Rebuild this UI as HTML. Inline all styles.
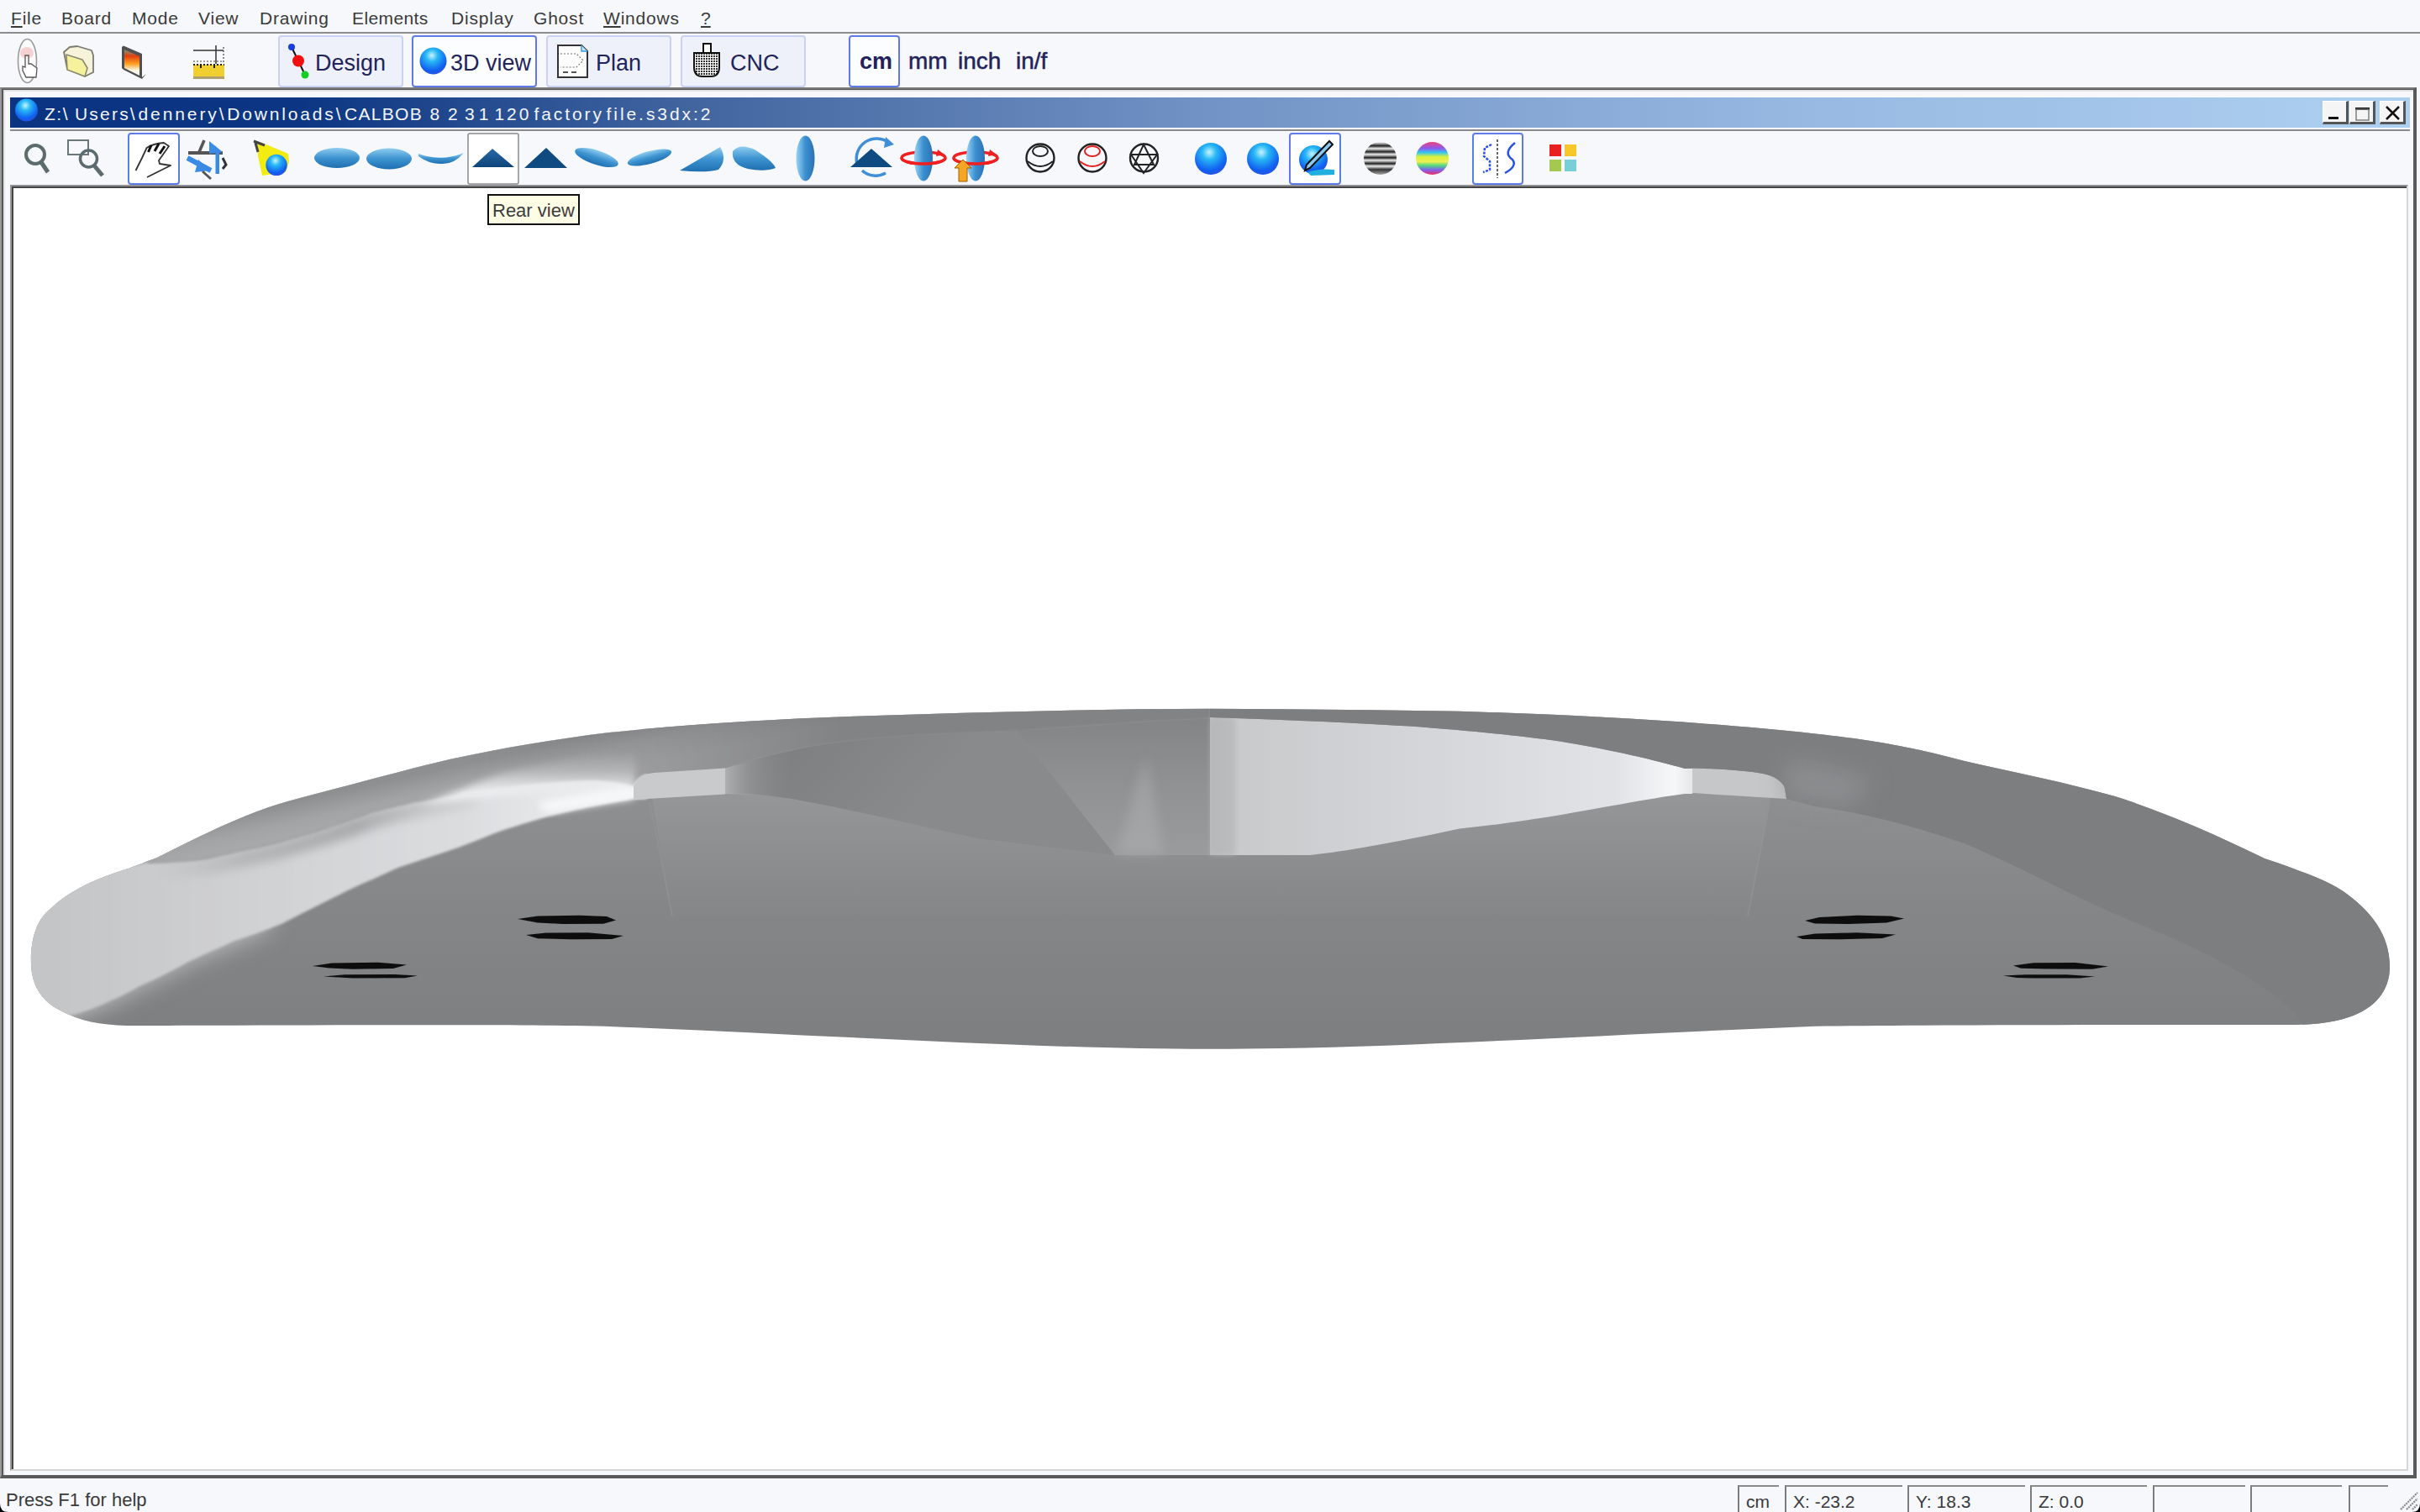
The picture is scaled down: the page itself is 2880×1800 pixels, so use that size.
<!DOCTYPE html>
<html><head><meta charset="utf-8">
<style>
*{margin:0;padding:0;box-sizing:border-box}
html,body{width:2880px;height:1800px;overflow:hidden;background:#f6f8fc;font-family:"Liberation Sans",sans-serif;position:relative}
.a{position:absolute}
.menu span{position:absolute;top:9px;font-size:21px;color:#3a3a3a;white-space:nowrap;line-height:26px}
.msep{top:38px;left:0;width:2880px;height:2px;background:#8c8c8c}
.btn{position:absolute;top:42px;height:62px;width:149px;border:2px solid #c9d2f2;border-radius:4px;background:#eef1f9}
.btn.sel{border-color:#5f7be8;background:#fcfdff}
.btxt{position:absolute;font-size:27px;color:#22235a;line-height:32px;top:15px;white-space:nowrap}
.unit{position:absolute;top:57px;font-size:28px;color:#22235a;line-height:32px;white-space:nowrap;-webkit-text-stroke:0.5px #22235a}
.frame{top:104px;left:0;width:2876px;height:1656px;border-top:2px solid #7a7a7a;border-left:2px solid #9a9a9a;border-right:4px solid #5a5a5a;border-bottom:4px solid #5a5a5a;box-shadow:inset 2px 1px 0 #555,inset 4px 3px 0 #e2e2e2;background:#f6f8fc}
.title{top:116px;left:12px;width:2856px;height:36px;background:linear-gradient(90deg,#0a3480 0%,#0c3683 12%,#41649f 28%,#7193c5 50%,#98b9e2 75%,#aed0f0 100%)}
.tsep{top:154px;left:12px;width:2856px;height:2px;background:#8a8a8a}
.canvas{top:220px;left:12px;width:2854px;height:1531px;background:#fff;border-top:2px solid #8f9093;border-left:2px solid #9a9a9a;border-right:2px solid #d6d6d6;border-bottom:2px solid #d6d6d6;box-shadow:inset 2px 2px 0 #454545}
.sp{position:absolute;top:1768px;height:40px;border-left:2px solid #7d7d7d;border-top:2px solid #8a8a8a;font-size:21px;color:#3a3a3a;padding-left:8px;line-height:36px;white-space:nowrap}
.tbb{position:absolute;top:120px;width:31px;height:28px;background:#f5f5f5;border-top:1px solid #fff;border-left:1px solid #fff;border-right:3px solid #555;border-bottom:3px solid #555}
</style></head><body>
<div class="a menu" style="left:0;top:0;width:2880px;height:38px">
<span style="left:13px;letter-spacing:0.8px"><u>F</u>ile</span>
<span style="left:73px;letter-spacing:0.8px">Board</span>
<span style="left:157px;letter-spacing:0.8px">Mode</span>
<span style="left:236px;letter-spacing:0.8px">View</span>
<span style="left:309px;letter-spacing:0.8px">Drawing</span>
<span style="left:419px;letter-spacing:0.4px">Elements</span>
<span style="left:537px;letter-spacing:0.8px">Display</span>
<span style="left:635px;letter-spacing:0.8px">Ghost</span>
<span style="left:718px;letter-spacing:0.8px"><u>W</u>indows</span>
<span style="left:834px"><u>?</u></span>
</div>
<div class="a msep"></div>
<div class="btn" style="left:331px"><span class="btxt" style="left:42px">Design</span></div>
<div class="btn sel" style="left:490px"><span class="btxt" style="left:44px">3D view</span></div>
<div class="btn" style="left:650px"><span class="btxt" style="left:57px">Plan</span></div>
<div class="btn" style="left:810px"><span class="btxt" style="left:57px">CNC</span></div>
<div class="btn sel" style="left:1010px;width:61px"></div>
<span class="unit" style="left:1023px;font-size:27px;font-weight:bold;-webkit-text-stroke:0">cm</span>
<span class="unit" style="left:1081px">mm</span>
<span class="unit" style="left:1140px">inch</span>
<span class="unit" style="left:1209px">in/f</span>
<div class="a frame"></div>
<div class="a title"></div>
<div class="a" style="left:0;top:123px;width:900px;height:26px;font-size:21px;line-height:26px;color:#f4f6fa;white-space:nowrap"><span style="position:absolute;left:53px;letter-spacing:1.5px">Z:\</span><span style="position:absolute;left:89px;letter-spacing:2.2px">Users\</span><span style="position:absolute;left:164.5px;letter-spacing:2.9px">dennery\</span><span style="position:absolute;left:270.3px;letter-spacing:2.83px">Downloads\</span><span style="position:absolute;left:410px;letter-spacing:1.3px">CALBOB</span><span style="position:absolute;left:511.5px;letter-spacing:0px">8</span><span style="position:absolute;left:533px;letter-spacing:0px">2</span><span style="position:absolute;left:553px;letter-spacing:5px">31</span><span style="position:absolute;left:588.5px;letter-spacing:2.9px">120</span><span style="position:absolute;left:635.5px;letter-spacing:2.9px">factory</span><span style="position:absolute;left:721.5px;letter-spacing:2.94px">file.s3dx:2</span></div>
<div class="tbb" style="left:2764px"></div>
<div class="tbb" style="left:2796px"></div>
<div class="tbb" style="left:2832px"></div>
<div class="a tsep"></div>
<div class="a canvas"></div>
<div class="a" style="left:580px;top:231px;width:110px;height:37px;background:#fdfde6;border:2px solid #111"></div>
<div class="a" style="left:586px;top:238px;font-size:22px;line-height:26px;color:#3c3c3c;white-space:nowrap">Rear view</div>
<div class="a" style="left:7px;top:1773px;font-size:22px;line-height:26px;color:#3a3a3a;white-space:nowrap">Press F1 for help</div>
<div class="sp" style="left:2068px;width:49px">cm</div>
<div class="sp" style="left:2124px;width:140px">X: -23.2</div>
<div class="sp" style="left:2270px;width:140px">Y: 18.3</div>
<div class="sp" style="left:2416px;width:139px">Z: 0.0</div>
<div class="sp" style="left:2562px;width:110px"></div>
<div class="sp" style="left:2678px;width:109px"></div>
<div class="sp" style="left:2795px;width:47px"></div>
<!--ICONS--><svg class="a" style="left:0;top:0" width="2880" height="240" viewBox="0 0 2880 240">
<defs>
<radialGradient id="gs" cx="0.45" cy="0.3" r="0.75">
<stop offset="0" stop-color="#c8f4ff"/><stop offset="0.3" stop-color="#27b8f5"/><stop offset="0.75" stop-color="#1160f0"/><stop offset="1" stop-color="#2a4fe0"/>
</radialGradient>
<linearGradient id="gl" x1="0" y1="0" x2="0" y2="1">
<stop offset="0" stop-color="#8fcdf0"/><stop offset="0.5" stop-color="#3d93d0"/><stop offset="1" stop-color="#1f6fb0"/>
</linearGradient>
<linearGradient id="glv" x1="0" y1="0" x2="1" y2="0">
<stop offset="0" stop-color="#9ad4f5"/><stop offset="0.5" stop-color="#3b8fcf"/><stop offset="1" stop-color="#2b72b5"/>
</linearGradient>
<linearGradient id="gt" x1="0" y1="0" x2="0" y2="1">
<stop offset="0" stop-color="#2a6aa8"/><stop offset="1" stop-color="#0c4478"/>
</linearGradient>
<linearGradient id="gstripe" x1="0" y1="0" x2="0" y2="1">
<stop offset="0" stop-color="#fff"/><stop offset="0.12" stop-color="#222"/><stop offset="0.2" stop-color="#eee"/><stop offset="0.3" stop-color="#222"/><stop offset="0.38" stop-color="#eee"/><stop offset="0.48" stop-color="#222"/><stop offset="0.56" stop-color="#eee"/><stop offset="0.66" stop-color="#222"/><stop offset="0.74" stop-color="#eee"/><stop offset="0.84" stop-color="#333"/><stop offset="1" stop-color="#aaa"/>
</linearGradient>
<linearGradient id="grain" x1="0" y1="0" x2="0" y2="1">
<stop offset="0" stop-color="#f0407a"/><stop offset="0.2" stop-color="#8a5cf0"/><stop offset="0.32" stop-color="#30c8f0"/><stop offset="0.45" stop-color="#d8f040"/><stop offset="0.6" stop-color="#f0f050"/><stop offset="0.72" stop-color="#50d880"/><stop offset="0.85" stop-color="#8060f0"/><stop offset="1" stop-color="#f03060"/>
</linearGradient>
<linearGradient id="gfilm" x1="0" y1="0" x2="0" y2="1">
<stop offset="0" stop-color="#7a9a80"/><stop offset="0.25" stop-color="#e04010"/><stop offset="0.55" stop-color="#ffa020"/><stop offset="0.8" stop-color="#fff8e8"/><stop offset="1" stop-color="#f0f0e8"/>
</linearGradient>
<pattern id="dots" width="3" height="3" patternUnits="userSpaceOnUse"><rect width="3" height="3" fill="#fff"/><rect width="2" height="2" fill="#333"/></pattern>
</defs>
<!-- toolbar1 -->
<ellipse cx="32.5" cy="72.5" rx="11" ry="26" fill="#fbfbfb" stroke="#9a9a9a" stroke-width="1.6"/>
<ellipse cx="32" cy="63" rx="8" ry="7" fill="#f6c6c8" opacity="0.8"/>
<path d="M30 66 L30 80 L27 79 L27 84 L31 92 L43 92 L44 81 L37 76 L34 76 L34 66 Z" fill="#fff" stroke="#555" stroke-width="1.3"/>
<path d="M76 62 L83 56 L92 55 L109 60 L111 66 L111 86 L101 91 L80 82 Z" fill="#f6f3da" stroke="#7a7a70" stroke-width="1.8" stroke-linejoin="round"/>
<path d="M79 65 L98 71 L104 81 L101 91 L80 83 Z" fill="#f5f19c" stroke="#8a8a70" stroke-width="1.6" stroke-linejoin="round"/>
<path d="M145 56 L147 54.5 L169 64 L169 92 L174 88 L169 94 L147 83 L145 81 Z" fill="#505050"/>
<path d="M148 59 L166 67 L166 90 L148 81 Z" fill="url(#gfilm)"/>
<rect x="230" y="77" width="37" height="17" fill="#f0cf30"/>
<rect x="230" y="91" width="37" height="3" fill="#b0a070"/>
<line x1="230" y1="77" x2="267" y2="77" stroke="#222" stroke-width="2" stroke-dasharray="2 2"/>
<line x1="230" y1="60" x2="266" y2="60" stroke="#333" stroke-width="1.5"/>
<line x1="257" y1="54" x2="257" y2="76" stroke="#333" stroke-width="1.5"/>
<line x1="266" y1="56" x2="266" y2="76" stroke="#444" stroke-width="1.2" stroke-dasharray="2 2"/>
<line x1="230" y1="73" x2="266" y2="73" stroke="#444" stroke-width="1.2" stroke-dasharray="2 2"/>
<line x1="239" y1="77" x2="239" y2="81" stroke="#222" stroke-width="2"/>
<line x1="255" y1="77" x2="255" y2="81" stroke="#222" stroke-width="2"/>
<!-- design icon -->
<line x1="347" y1="56" x2="363" y2="89" stroke="#111" stroke-width="2"/>
<circle cx="347" cy="56" r="4" fill="#1a3de0"/>
<circle cx="355" cy="72.5" r="7" fill="#f01010"/>
<circle cx="363" cy="89" r="4.5" fill="#10d020"/>
<circle cx="515.5" cy="72.5" r="16" fill="url(#gs)"/>
<!-- plan doc -->
<path d="M664 54 L692 54 L699 61 L699 92 L664 92 Z" fill="#fdfdfd" stroke="#333" stroke-width="2"/>
<path d="M692 54 L692 61 L699 61" fill="#bfe6ff" stroke="#3aa0e0" stroke-width="1.5"/>
<path d="M667 64 L686 64 L694 72 L686 80 L667 80" fill="none" stroke="#777" stroke-width="1.2" stroke-dasharray="2 2"/>
<path d="M670 86 L676 86 M680 86 L686 86" stroke="#555" stroke-width="2"/>
<!-- cnc -->
<rect x="837" y="52" width="9" height="11" fill="#fff" stroke="#111" stroke-width="2"/>
<path d="M826 63 L856 63 L856 80 Q856 91 846 91 L836 91 Q826 91 826 80 Z" fill="url(#dots)" stroke="#111" stroke-width="2"/>
<!-- title icon -->
<circle cx="31.5" cy="131" r="13.5" fill="url(#gs)"/>
<!-- title buttons glyphs -->
<rect x="2771" y="139" width="12" height="3" fill="#111"/>
<rect x="2803" y="128" width="17" height="3" fill="#111"/>
<rect x="2804" y="130" width="15" height="13" fill="none" stroke="#777" stroke-width="1.4"/>
<path d="M2840 127 L2855 142 M2855 127 L2840 142" stroke="#111" stroke-width="2.5"/>
<!-- toolbar2 -->
<circle cx="42" cy="184" r="11" fill="none" stroke="#5b6b6e" stroke-width="4"/>
<line x1="49" y1="193" x2="57" y2="205" stroke="#5b6b6e" stroke-width="5"/>
<rect x="81" y="167" width="24" height="17" fill="none" stroke="#6b7677" stroke-width="2"/>
<circle cx="105.5" cy="189" r="10" fill="none" stroke="#5b6b6e" stroke-width="3.5"/>
<line x1="112" y1="197" x2="122" y2="209" stroke="#5b6b6e" stroke-width="5"/>
<rect x="153" y="159" width="60" height="60" rx="3" fill="#fff" stroke="#5f7be8" stroke-width="2"/>
<path d="M161.5 203 L169 188 L174.6 176 Q182 171 195 170 L201 174 L189 191 L190 195 L203 197 L175 211" fill="none" stroke="#333" stroke-width="1.8" stroke-linejoin="round"/>
<path d="M176.5 181 L180 173 M184 180 L189 171 M190 183 L196 174" stroke="#111" stroke-width="3"/>
<path d="M243 167 L237 181" stroke="#555" stroke-width="3.5"/>
<path d="M224 182 L265 182" stroke="#555" stroke-width="4"/>
<rect x="256.5" y="180" width="4.5" height="27" fill="#3a8ae6"/>
<path d="M249 168 L265 181 L249 183 Z" fill="#3a8ae6"/>
<path d="M223 188 L251 203" stroke="#3a8ae6" stroke-width="6"/>
<path d="M232 205 L236 190 L250 203 Z" fill="#3a8ae6"/>
<path d="M241 204 L251 213" stroke="#555" stroke-width="3"/>
<path d="M265 188 L269 196 L265 201" fill="none" stroke="#333" stroke-width="3"/>
<path d="M306 171 L317 172 L343 183 L344 193 L340 205 L312 209 L307 186 Z" fill="#f2ec10"/>
<path d="M302 168 L315 173 M304 170 L307 181" stroke="#444" stroke-width="3"/>
<circle cx="329" cy="196.4" r="12.7" fill="url(#gs)"/>
<ellipse cx="401" cy="188" rx="27" ry="12" fill="url(#gl)"/>
<ellipse cx="463" cy="189" rx="27" ry="12.5" fill="url(#gl)"/>
<path d="M498 183 Q525 193 552 182 Q540 196 525 195 Q510 195 498 186 Z" fill="url(#gl)"/>
<rect x="557" y="159" width="60" height="60" rx="2" fill="#fff" stroke="#8a8a8a" stroke-width="1.5"/>
<path d="M562 199 L586 177 L612 199 Z" fill="url(#gt)"/>
<path d="M624 200 L650 176 L675 200 Z" fill="#0f4a80"/>
<ellipse cx="710" cy="187.5" rx="27" ry="8.5" transform="rotate(18 710 187.5)" fill="url(#gl)"/>
<ellipse cx="773" cy="187.5" rx="27" ry="7.5" transform="rotate(-15 773 187.5)" fill="url(#gl)"/>
<path d="M809 203 L857 175 Q866 190 855 202 Q840 206 809 203 Z" fill="url(#gl)"/>
<path d="M872 180 Q880 170 898 178 Q920 192 923 200 Q910 205 890 201 Q870 196 872 180 Z" fill="url(#gl)"/>
<ellipse cx="958.5" cy="188.5" rx="11" ry="27" fill="url(#glv)"/>
<!-- rotate triangle -->
<path d="M1020 195 A24 24 0 0 1 1058 170" fill="none" stroke="#3e8fd8" stroke-width="3.5"/>
<path d="M1054 163 L1064 172 L1052 176 Z" fill="#3e8fd8"/>
<path d="M1026 203 A24 24 0 0 0 1054 206" fill="none" stroke="#3e8fd8" stroke-width="3.5"/>
<path d="M1012 199 L1037 177 L1062 199 Z" fill="#0f4a80"/>
<ellipse cx="1099" cy="188" rx="26" ry="7" fill="none" stroke="#f02020" stroke-width="3.5"/>
<ellipse cx="1099" cy="188.5" rx="11" ry="27" fill="url(#glv)"/>
<path d="M1073 188 A26 7 0 0 0 1125 188" fill="none" stroke="#f02020" stroke-width="3.5"/>
<path d="M1116 178 L1124 184 L1114 186 Z" fill="#f02020"/>
<ellipse cx="1161" cy="188" rx="26" ry="7" fill="none" stroke="#f02020" stroke-width="3.5"/>
<ellipse cx="1161" cy="188.5" rx="11" ry="27" fill="url(#glv)"/>
<path d="M1135 188 A26 7 0 0 0 1187 188" fill="none" stroke="#f02020" stroke-width="3.5"/>
<path d="M1178 178 L1186 184 L1176 186 Z" fill="#f02020"/>
<path d="M1146 190 L1156 200 L1151 200 L1151 216 L1141 216 L1141 200 L1136 200 Z" fill="#f5a623" stroke="#a06000" stroke-width="1"/>
<circle cx="1238" cy="188" r="16.5" fill="none" stroke="#222" stroke-width="2.4"/>
<ellipse cx="1238" cy="180" rx="9" ry="6" fill="none" stroke="#222" stroke-width="2"/>
<path d="M1223 192 Q1238 204 1253 192" fill="none" stroke="#222" stroke-width="2"/>
<circle cx="1300" cy="188" r="16.5" fill="none" stroke="#222" stroke-width="2.4"/>
<ellipse cx="1300" cy="180" rx="9" ry="6" fill="none" stroke="#e02020" stroke-width="2"/>
<path d="M1285 192 Q1300 204 1315 192" fill="none" stroke="#e02020" stroke-width="2"/>
<circle cx="1361.5" cy="188" r="16.5" fill="none" stroke="#222" stroke-width="2.4"/>
<path d="M1346 184 L1377 184 L1361 206 Z M1350 196 L1373 196 L1361 172 Z" fill="none" stroke="#222" stroke-width="2"/>
<circle cx="1441" cy="189" r="19" fill="url(#gs)"/>
<circle cx="1503" cy="189" r="19" fill="url(#gs)"/>
<rect x="1535" y="159" width="60" height="60" rx="3" fill="#fff" stroke="#5f7be8" stroke-width="2"/>
<circle cx="1563" cy="190" r="17" fill="url(#gs)"/>
<path d="M1556 205 Q1570 200 1588 202 L1588 208 L1560 209 Z" fill="#20b0e0"/>
<path d="M1555 196 L1582 168 L1586 172 L1559 200 L1553 203 Z" fill="#8ac8f0" stroke="#111" stroke-width="2"/>
<circle cx="1642.5" cy="188.5" r="19.5" fill="url(#gstripe)"/>
<circle cx="1704.5" cy="188.5" r="19.5" fill="url(#grain)"/>
<rect x="1753" y="159" width="59" height="60" rx="3" fill="#fff" stroke="#5f7be8" stroke-width="2"/>
<path d="M1775 172 L1767 176 L1766 186 L1773 192 L1773 202 L1765 205" fill="none" stroke="#2850e8" stroke-width="2.5" stroke-dasharray="3 1.5"/>
<line x1="1782" y1="166" x2="1782" y2="212" stroke="#333" stroke-width="1.5" stroke-dasharray="3 2"/>
<path d="M1803 170 Q1788 182 1800 190 Q1806 198 1791 206" fill="none" stroke="#2850e8" stroke-width="2.5"/>
<rect x="1844" y="172" width="14" height="14" fill="#e82020"/>
<rect x="1862" y="172" width="14" height="14" fill="#f8c82a"/>
<rect x="1844" y="190" width="14" height="14" fill="#a5c850"/>
<rect x="1862" y="190" width="14" height="14" fill="#78cfd8"/>
</svg>
<!--/ICONS-->
<!--BOARD--><svg class="a" style="left:0;top:0" width="2880" height="1800" viewBox="0 0 2880 1800">
<defs>
<clipPath id="cs"><path id="sil" d="M37,1148 C36,1118 44,1094 60,1082 C80,1062 110,1048 140,1038 C160,1032 170,1027 187,1021 C240,994 300,964 357,950 C420,934 480,917 535,904 C600,890 660,880 725,872 C820,862 920,856 1017,852.7 C1160,848 1300,844 1440,843.8 C1540,844 1640,845 1737,846.8 C1880,851 2040,860 2160,873.5 C2240,882 2290,893 2338,906 C2400,920 2460,932 2517,948 C2580,968 2640,995 2695,1022 L2713,1028 C2745,1040 2770,1048 2790,1062 C2822,1085 2843,1112 2844,1148 C2845,1178 2828,1200 2795,1211 C2772,1219 2745,1220 2725,1220 C2600,1220 2300,1220 2160,1221.7 C1900,1232 1650,1248.8 1440,1248.8 C1230,1248.8 980,1232 720,1221.7 C560,1219 300,1221 150,1221 C120,1220 95,1216 70,1202 C48,1190 38,1172 37,1148 Z"/></clipPath>
<filter id="blur7" x="-20%" y="-20%" width="140%" height="140%"><feGaussianBlur stdDeviation="6"/></filter>
<filter id="blur8" x="-20%" y="-20%" width="140%" height="140%"><feGaussianBlur stdDeviation="7"/></filter>
<filter id="blur2" x="-20%" y="-20%" width="140%" height="140%"><feGaussianBlur stdDeviation="1.5"/></filter>
<filter id="blur4" x="-20%" y="-20%" width="140%" height="140%"><feGaussianBlur stdDeviation="4"/></filter>
<filter id="blur6" x="-30%" y="-30%" width="160%" height="160%"><feGaussianBlur stdDeviation="6"/></filter>
<filter id="blur10" x="-30%" y="-30%" width="160%" height="160%"><feGaussianBlur stdDeviation="10"/></filter>
<filter id="blur2b" x="-20%" y="-20%" width="140%" height="140%"><feGaussianBlur stdDeviation="2.5"/></filter>
<filter id="blur05" x="-20%" y="-50%" width="140%" height="200%"><feGaussianBlur stdDeviation="0.7"/></filter>
<filter id="blur3" x="-20%" y="-20%" width="140%" height="140%"><feGaussianBlur stdDeviation="3"/></filter>
<filter id="blur14" x="-50%" y="-50%" width="200%" height="200%"><feGaussianBlur stdDeviation="14"/></filter>
<linearGradient id="gBot" x1="0" y1="940" x2="0" y2="1250" gradientUnits="userSpaceOnUse">
<stop offset="0" stop-color="#8f9092"/><stop offset="0.45" stop-color="#858688"/><stop offset="1" stop-color="#7d7e80"/>
</linearGradient>
<linearGradient id="gRail" x1="60" y1="0" x2="754" y2="0" gradientUnits="userSpaceOnUse">
<stop offset="0" stop-color="#c4c5c7"/><stop offset="0.35" stop-color="#d0d1d3"/><stop offset="0.7" stop-color="#dbdcde"/><stop offset="0.92" stop-color="#eaebed"/><stop offset="1" stop-color="#f4f5f7"/>
</linearGradient>
<linearGradient id="gFacetV" x1="480" y1="925" x2="491" y2="974" gradientUnits="userSpaceOnUse">
<stop offset="0" stop-color="#8e8f91"/><stop offset="0.45" stop-color="#a2a3a5"/><stop offset="1" stop-color="#abacae"/>
</linearGradient>
<linearGradient id="gDarkH" x1="560" y1="0" x2="1000" y2="0" gradientUnits="userSpaceOnUse">
<stop offset="0" stop-color="#000" stop-opacity="0"/><stop offset="0.5" stop-color="#000" stop-opacity="0.1"/><stop offset="1" stop-color="#000" stop-opacity="0.24"/>
</linearGradient>
<linearGradient id="gLift" x1="0" y1="896" x2="0" y2="944" gradientUnits="userSpaceOnUse">
<stop offset="0" stop-color="#fff" stop-opacity="0"/><stop offset="0.45" stop-color="#e0e1e3" stop-opacity="0.3"/><stop offset="0.75" stop-color="#e8e9eb" stop-opacity="0.75"/><stop offset="1" stop-color="#eeeff1" stop-opacity="0.95"/>
</linearGradient>
<linearGradient id="gCenterLift" x1="0" y1="950" x2="0" y2="1100" gradientUnits="userSpaceOnUse">
<stop offset="0" stop-color="#fff" stop-opacity="0.06"/><stop offset="1" stop-color="#fff" stop-opacity="0"/>
</linearGradient>
<linearGradient id="gShadow" x1="190" y1="0" x2="580" y2="0" gradientUnits="userSpaceOnUse">
<stop offset="0" stop-color="#c2c3c5" stop-opacity="0.3"/><stop offset="0.25" stop-color="#b3b4b6" stop-opacity="0.9"/><stop offset="0.6" stop-color="#a6a7a9" stop-opacity="0.95"/><stop offset="1" stop-color="#c0c1c3" stop-opacity="0.2"/>
</linearGradient>
<linearGradient id="gNubR" x1="863" y1="0" x2="945" y2="0" gradientUnits="userSpaceOnUse">
<stop offset="0" stop-color="#b0b1b3" stop-opacity="0.95"/><stop offset="0.35" stop-color="#9c9d9f" stop-opacity="0.6"/><stop offset="1" stop-color="#8a8b8d" stop-opacity="0"/>
</linearGradient>
<linearGradient id="gFacet" x1="180" y1="0" x2="1000" y2="0" gradientUnits="userSpaceOnUse">
<stop offset="0" stop-color="#b6b7b9"/><stop offset="0.3" stop-color="#b1b2b4"/><stop offset="0.45" stop-color="#aaabad"/><stop offset="0.6" stop-color="#a0a1a3"/><stop offset="0.75" stop-color="#919294"/><stop offset="0.9" stop-color="#878889"/><stop offset="1" stop-color="#838486"/>
</linearGradient>
<linearGradient id="gBand" x1="0" y1="850" x2="0" y2="950" gradientUnits="userSpaceOnUse">
<stop offset="0" stop-color="#848587"/><stop offset="1" stop-color="#959698"/>
</linearGradient>
<linearGradient id="gBowlL" x1="900" y1="880" x2="1050" y2="1010" gradientUnits="userSpaceOnUse">
<stop offset="0" stop-color="#7c7d7f"/><stop offset="1" stop-color="#898a8c"/>
</linearGradient>
<linearGradient id="gFacetC" x1="0" y1="860" x2="0" y2="1018" gradientUnits="userSpaceOnUse">
<stop offset="0" stop-color="#848587"/><stop offset="0.5" stop-color="#919294"/><stop offset="1" stop-color="#9a9b9d"/>
</linearGradient>
<linearGradient id="gBowlR" x1="1440" y1="0" x2="2010" y2="0" gradientUnits="userSpaceOnUse">
<stop offset="0" stop-color="#bdbec0"/><stop offset="0.06" stop-color="#c9cacc"/><stop offset="0.5" stop-color="#d6d7da"/><stop offset="0.85" stop-color="#e2e3e6"/><stop offset="0.97" stop-color="#f6f7f9"/><stop offset="1" stop-color="#e8e9eb"/>
</linearGradient>
<linearGradient id="gRailR" x1="2200" y1="930" x2="2300" y2="880" gradientUnits="userSpaceOnUse">
<stop offset="0" stop-color="#8f9092"/><stop offset="1" stop-color="#7d7e80"/>
</linearGradient>
</defs>
<g clip-path="url(#cs)">
<!-- base bottom -->
<rect x="0" y="800" width="2880" height="500" fill="url(#gBot)"/>
<path d="M768,900 L2116,900 L2080,1100 L800,1100 Z" fill="url(#gCenterLift)"/>
<!-- left rail light, soft lower edge -->
<path d="M0,700 L320,700 L320,1104 C290,1118 260,1130 224,1145 C200,1158 185,1166 166,1174 C150,1184 140,1188 129,1193 C115,1200 105,1204 92,1208 C80,1214 70,1220 60,1228 L0,1240 Z" fill="#c0c1c3" filter="url(#blur14)"/>
<path d="M0,700 L770,700 L770,951 L753,951.4 C730,955 715,958 700,961 C685,964 670,968 652,972 C635,977 615,983 597.5,988.8 C580,995 565,1002 548,1008 C525,1016 500,1024 473.6,1033 C455,1042 435,1050 414,1060 C390,1072 360,1087 335,1100 C315,1108 300,1113 279,1120 C260,1129 240,1137 224,1145 C200,1158 185,1166 168,1173 C155,1180 145,1186 131,1191.5 C120,1197 108,1202 94,1206 L0,1230 Z" fill="url(#gRail)" filter="url(#blur2)"/>
<!-- darker zone under facet edge -->
<path d="M200,1036 C215,1035 222,1034.5 229,1034 C250,1032 265,1027 282,1023.6 C300,1020 318,1016 335,1011.7 C355,1006 370,1001 388,995.8 C405,990 423,984 441,977.3 C460,971 475,968 494,964 C515,960 530,957 560,952" fill="none" stroke="url(#gShadow)" stroke-width="20" stroke-linecap="round" filter="url(#blur6)"/>
<!-- upper facet + band -->
<path d="M0,780 L1440,780 L1440,855.7 C1300,862 1211,870.6 1211,870.6 C1120,873 1017,879 960,890 C920,898 890,906 863,914.4 L778,920 C766,921 758,926 754,936 C740,931 720,929 700,929 C670,930 640,932 600,937 C575,940 560,942 548,944 C525,949 510,952 494,954 C470,960 455,963 441,967.3 C420,975 405,980 388,985.8 C370,992 350,997 335,1001.7 C315,1007 300,1010 282,1013.6 C260,1019 245,1023 229,1024 C205,1026 190,1027 176,1027 L0,1060 Z" fill="url(#gFacetV)" filter="url(#blur2)"/>
<path d="M0,780 L1440,780 L1440,855.7 C1300,862 1211,870.6 1211,870.6 C1120,873 1017,879 960,890 C920,898 890,906 863,914.4 L778,920 C766,921 758,926 754,936 C740,931 720,929 700,929 C670,930 640,932 600,937 C575,940 560,942 548,944 C525,949 510,952 494,954 C470,960 455,963 441,967.3 C420,975 405,980 388,985.8 C370,992 350,997 335,1001.7 C315,1007 300,1010 282,1013.6 C260,1019 245,1023 229,1024 C205,1026 190,1027 176,1027 L0,1060 Z" fill="url(#gDarkH)" filter="url(#blur2)"/>
<path d="M176,1027 C190,1027 205,1026 229,1024 C245,1023 260,1019 282,1013.6 C300,1010 315,1007 335,1001.7 C350,997 370,992 388,985.8 C405,980 420,975 441,967.3 C455,963 470,960 494,954 C510,952 525,949 548,944" fill="none" stroke="#8f9092" stroke-width="2" opacity="0.6" filter="url(#blur2)"/>
<!-- soft lightening of band just above highlight -->
<path d="M500,958 C600,946 680,938 756,940 L756,896 C700,900 640,910 600,920 C570,930 540,944 500,958 Z" fill="url(#gLift)" filter="url(#blur4)"/>
<path d="M640,955 C690,946 730,940 754,938 L754,951 C720,956 690,962 650,968 Z" fill="#f6f7f9" filter="url(#blur4)"/>
<!-- nub left -->
<path d="M754,952 L754,936 C758,926 766,921 778,920 L863,914.4 L863,945.4 Z" fill="#c9cacc"/>
<!-- bowl left -->
<path d="M864,914 C890,906 920,898 960,890 C1017,879 1120,873 1211,870.6 L1327,1018 L1166,998.5 C1100,985 1020,965 958,954 C930,948 890,944 864,944 Z" fill="url(#gBowlL)"/>
<path d="M863,914.4 C890,906 920,898 960,890 L960,960 C930,950 890,945 863,945 Z" fill="url(#gNubR)"/>
<!-- facet center -->
<path d="M1211,870.6 C1300,864 1380,858 1440,855.7 L1440,1018 L1327,1018 Z" fill="url(#gFacetC)"/>
<path d="M1328,1017 L1385,1017 L1364,900 Z" fill="#b3b4b6" opacity="0.45" filter="url(#blur8)"/>
<!-- bowl right -->
<path d="M1440,854 C1540,857 1620,861 1678,864.6 C1750,870 1810,876 1856,882.5 C1920,893 1970,905 2005,915 L2014,915 L2014,945 L2005,945 C1930,955 1850,975 1737,986.6 C1660,1003 1600,1014 1559,1018 L1440,1018 Z" fill="url(#gBowlR)"/>
<path d="M1440,854 L1470,854 L1470,1018 L1440,1018 Z" fill="#b3b4b6" opacity="0.6" filter="url(#blur3)"/>
<!-- nub right -->
<path d="M2014,914.4 C2050,915.5 2080,918 2098,921 C2112,924 2121,930 2124,938 L2126,951 L2014,944 Z" fill="#c6c7c9"/>
<!-- right rail dark -->
<path d="M1440,800 L2880,800 L2880,1300 L2745,1300 L2740,1218 C2725,1195 2690,1170 2636,1141 C2595,1120 2560,1106 2517,1088 C2460,1063 2400,1030 2338.5,1004.5 C2280,984 2220,968 2160,960 L2126,951 L2124,938 C2121,930 2112,924 2098,921 C2080,918 2050,915.5 2014,914.4 L2005,915 C1970,905 1920,893 1856,882.5 C1810,876 1750,870 1678,864.6 C1620,861 1540,857 1440,854 Z" fill="#7d7e80"/>
<path d="M2124,951 C2150,955 2180,958 2200,962 L2230,930 C2190,915 2150,905 2124,905 Z" fill="#939496" opacity="0.7" filter="url(#blur14)"/>
<!-- faint lines -->
<path d="M773,954 L800,1090" stroke="#959698" stroke-width="2" opacity="0.5"/>
<path d="M2106,957 L2080,1090" stroke="#959698" stroke-width="2" opacity="0.5"/>
<!-- fin boxes -->
<g fill="#111" filter="url(#blur05)">
<path d="M372,1150 L395,1146.5 L450,1145.8 L484,1148.5 L468,1153 L420,1153.8 L392,1152.5 Z"/>
<path d="M385,1162.5 L410,1160.3 L470,1160 L497,1161.5 L482,1164.3 L420,1164.6 Z"/>
<path d="M616,1094 L640,1090.5 L690,1089.8 L722,1091 L733,1095.5 L718,1099.8 L670,1100 L640,1098.5 Z"/>
<path d="M626,1113 L650,1110.5 L700,1110.2 L742,1114 L728,1118 L680,1118.2 L640,1117.2 Z"/>
<path d="M2148,1096 L2165,1092 L2210,1089.8 L2250,1090.5 L2266,1093.5 L2245,1098.5 L2200,1100 L2160,1099.5 Z"/>
<path d="M2138,1115 L2160,1111.5 L2210,1110.2 L2256,1112.5 L2240,1117 L2190,1118.2 L2145,1118 Z"/>
<path d="M2396,1149.5 L2420,1146.3 L2470,1146 L2509,1150.5 L2490,1153.8 L2440,1153.6 L2405,1152.8 Z"/>
<path d="M2384,1161.5 L2410,1160.2 L2460,1160.2 L2493,1162.5 L2475,1164.4 L2420,1164.6 L2400,1164 Z"/>
</g>
</g>
</svg>
<!--/BOARD-->
<!--EXTRA--><svg class="a" style="left:2850px;top:1770px" width="30" height="30" viewBox="2850 1770 30 30">
<path d="M2857 1797 L2877 1777 M2864 1797 L2877 1784 M2871 1797 L2877 1791" stroke="#8a8a8a" stroke-width="2.2" stroke-dasharray="2 1"/>
</svg>
<svg class="a" style="left:0;top:1790px" width="10" height="10"><path d="M0 0 Q0 10 10 10 L0 10 Z" fill="#000"/></svg>
<svg class="a" style="left:2870px;top:1790px" width="10" height="10"><path d="M10 0 Q10 10 0 10 L10 10 Z" fill="#000"/></svg>
<!--/EXTRA-->
</body></html>
